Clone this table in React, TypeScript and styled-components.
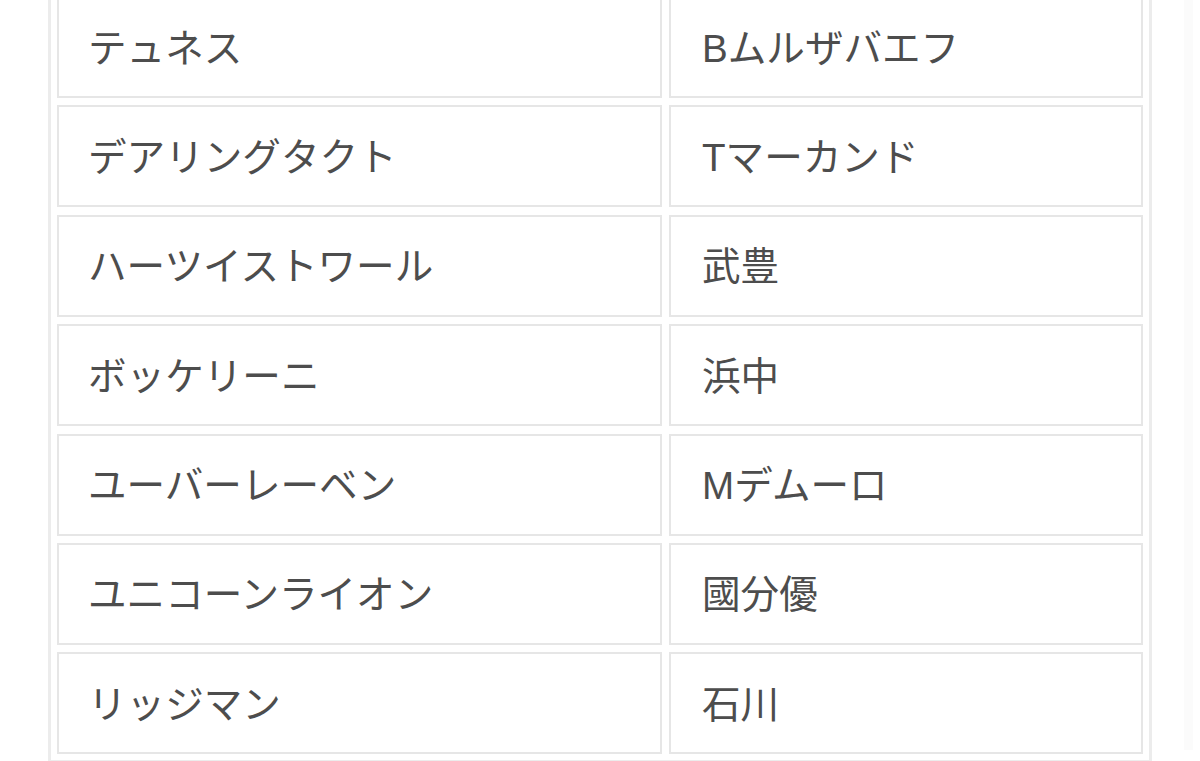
import { Fragment } from "react";
import styled, { createGlobalStyle } from "styled-components";

const GlobalStyle = createGlobalStyle`
  body {
    margin: 0;
    background: #ffffff;
    overflow: hidden;
  }
`;

const Page = styled.div`
  display: flex;
  align-items: flex-start;
  height: 761px;
  overflow: hidden;
`;

const Table = styled.div`
  margin: -13px 0 0 48px;
  border: 3px solid #ececec;
  padding: 6px;
  display: grid;
  grid-template-columns: 605px 474px;
  column-gap: 7px;
  row-gap: 7.4px;
`;

const Cell = styled.div<{ $right?: boolean }>`
  box-sizing: border-box;
  height: 102px;
  border: 2px solid #e6e6e6;
  padding: 0 0 5px ${p => (p.$right ? "31px" : "29px")};
  display: flex;
  align-items: center;
  font-family: "Liberation Sans", "Noto Sans CJK JP", sans-serif;
  font-size: 38.6px;
  color: #4d4d4d;
  white-space: nowrap;
`;

const Track = styled.div`
  width: 9px;
  height: 750px;
  margin-left: 32px;
  background: #fbfbfb;
`;

const rows: [string, string][] = [
  ["テュネス", "Bムルザバエフ"],
  ["デアリングタクト", "Tマーカンド"],
  ["ハーツイストワール", "武豊"],
  ["ボッケリーニ", "浜中"],
  ["ユーバーレーベン", "Mデムーロ"],
  ["ユニコーンライオン", "國分優"],
  ["リッジマン", "石川"],
];

function App() {
  return (
    <>
      <GlobalStyle />
      <Page>
        <Table>
          {rows.map(([horse, jockey]) => (
            <Fragment key={horse}>
              <Cell>{horse}</Cell>
              <Cell $right>{jockey}</Cell>
            </Fragment>
          ))}
        </Table>
        <Track />
      </Page>
    </>
  );
}

export default App;
